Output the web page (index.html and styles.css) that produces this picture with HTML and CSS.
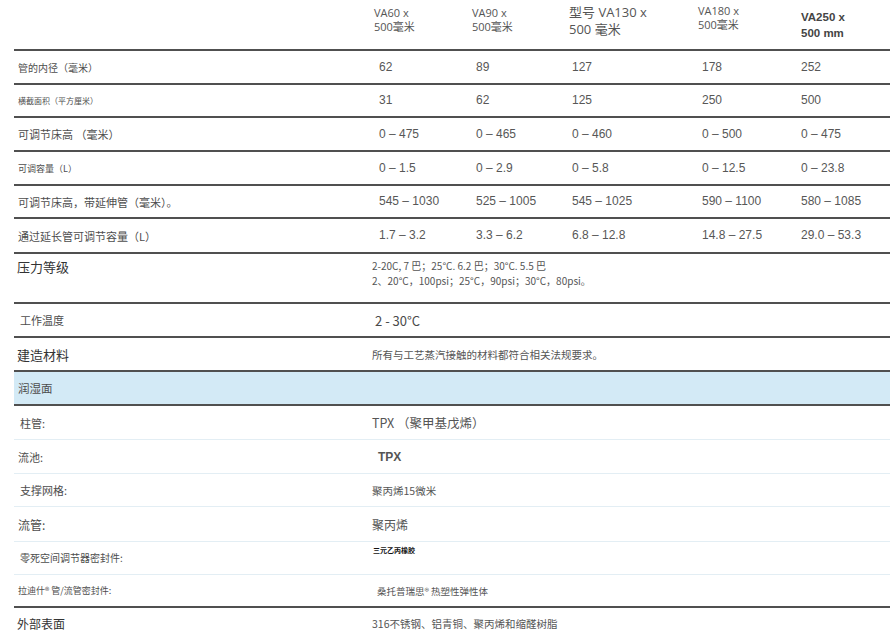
FILE: index.html
```html
<!DOCTYPE html>
<html lang="zh">
<head>
<meta charset="utf-8">
<title>规格</title>
<link rel="stylesheet" href="styles.css">
</head>
<body>
<div class="spec">
  <div class="row head">
    <div></div>
    <div class="h h-a">VA60 x<br>500毫米</div>
    <div class="h h-a">VA90 x<br>500毫米</div>
    <div class="h h-b">型号 VA130 x<br>500 毫米</div>
    <div class="h h-c">VA180 x<br>500毫米</div>
    <div class="h h-d">VA250 x<br>500 mm</div>
  </div>

  <div class="row dark h34">
    <div class="lbl f10">管的内径（毫米）</div>
    <div class="v">62</div><div class="v">89</div><div class="v">127</div><div class="v">178</div><div class="v">252</div>
  </div>
  <div class="row dark h33">
    <div class="lbl f8">横截面积（平方厘米）</div>
    <div class="v">31</div><div class="v">62</div><div class="v">125</div><div class="v">250</div><div class="v">500</div>
  </div>
  <div class="row dark h34">
    <div class="lbl f11">可调节床高 （毫米）</div>
    <div class="v">0 – 475</div><div class="v">0 – 465</div><div class="v">0 – 460</div><div class="v">0 – 500</div><div class="v">0 – 475</div>
  </div>
  <div class="row dark h34">
    <div class="lbl f9">可调容量（L）</div>
    <div class="v">0 – 1.5</div><div class="v">0 – 2.9</div><div class="v">0 – 5.8</div><div class="v">0 – 12.5</div><div class="v">0 – 23.8</div>
  </div>
  <div class="row dark h33">
    <div class="lbl f11">可调节床高，带延伸管（毫米）。</div>
    <div class="v">545 – 1030</div><div class="v">525 – 1005</div><div class="v">545 – 1025</div><div class="v">590 – 1100</div><div class="v">580 – 1085</div>
  </div>
  <div class="row dark h35">
    <div class="lbl f11">通过延长管可调节容量（L）</div>
    <div class="v">1.7 – 3.2</div><div class="v">3.3 – 6.2</div><div class="v">6.8 – 12.8</div><div class="v">14.8 – 27.5</div><div class="v">29.0 – 53.3</div>
  </div>
  <div class="row dark h50 top">
    <div class="lbl f13 big">压力等级</div>
    <div class="span pressure">2-20C, 7 巴；25°C. 6.2 巴；30°C. 5.5 巴<br>2、20°C，100psi；25°C，90psi；30°C，80psi。</div>
  </div>
  <div class="row dark h34">
    <div class="lbl f11 ind">工作温度</div>
    <div class="span temp">2 - 30°C</div>
  </div>
  <div class="row dark h34">
    <div class="lbl f13 big">建造材料</div>
    <div class="span s105">所有与工艺蒸汽接触的材料都符合相关法规要求。</div>
  </div>
  <div class="row blue h34">
    <div class="lbl f115">润湿面</div>
  </div>
  <div class="row light h34">
    <div class="lbl f11 ind">柱管:</div>
    <div class="span tpx">TPX （聚甲基戊烯）</div>
  </div>
  <div class="row light h34">
    <div class="lbl f11">流池:</div>
    <div class="span tpxb">TPX</div>
  </div>
  <div class="row light h33">
    <div class="lbl f11 ind">支撑网格:</div>
    <div class="span s105">聚丙烯15微米</div>
  </div>
  <div class="row light h35">
    <div class="lbl f12">流管:</div>
    <div class="span s12">聚丙烯</div>
  </div>
  <div class="row light h33 zero">
    <div class="lbl f10 ind">零死空间调节器密封件:</div>
    <div class="span tiny">三元乙丙橡胶</div>
  </div>
  <div class="row dark h33">
    <div class="lbl f9">拉迪什® 管/流管密封件:</div>
    <div class="span s95">桑托普瑞思® 热塑性弹性体</div>
  </div>
  <div class="row last">
    <div class="lbl f12 big">外部表面</div>
    <div class="span s105">316不锈钢、铝青铜、聚丙烯和缩醛树脂</div>
  </div>
</div>
</body>
</html>
```

FILE: styles.css
```css
html, body {
  margin: 0;
  padding: 0;
  background: #ffffff;
}

body {
  font-family: "Noto Sans CJK SC", "Noto Sans", sans-serif;
  color: #4a4a4a;
}

.spec {
  margin-left: 14px;
  width: 876px;
}

.row {
  display: grid;
  grid-template-columns: 358px 98px 97px 129px 103px 1fr;
  align-items: center;
  box-sizing: border-box;
}

.row.dark { border-bottom: 2px solid #505050; }
.row.light { border-bottom: 1px solid #e3eef4; }
.row.blue {
  background: #d3eaf6;
  border-bottom: 2px solid #505050;
}

.h33 { height: 33px; }
.h34 { height: 34px; }
.h35 { height: 35px; }
.h50 { height: 50px; }

.row.top { align-items: start; }

.head {
  height: 51px;
  border-bottom: 2px solid #505050;
  align-items: start;
}

.h {
  padding-left: 2px;
  color: #555;
  font-family: "Open Sans", "Noto Sans CJK SC", sans-serif;
  font-size: 11px;
  line-height: 14px;
}
.h-a { padding-top: 6px; }
.h-b { padding-top: 4px; font-size: 13px; line-height: 17px; }
.h-c { padding-top: 4px; }
.h-d {
  padding-top: 9px;
  font-family: "Liberation Sans", "Noto Sans CJK SC", sans-serif;
  font-weight: bold;
  font-size: 11.5px;
  line-height: 16px;
  color: #444;
}

.lbl {
  padding-left: 4px;
  white-space: nowrap;
  color: #4d4d4d;
}
.lbl.ind { padding-left: 6px; }
.lbl.big { padding-left: 3px; color: #333; }
.f8 { font-size: 8px; }
.f9 { font-size: 9px; }
.f10 { font-size: 10px; }
.f11 { font-size: 11px; }
.f115 { font-size: 11.5px; }
.f12 { font-size: 12px; }
.f13 { font-size: 13px; }

.v {
  font-family: "Liberation Sans", "Noto Sans CJK SC", sans-serif;
  font-size: 12px;
  color: #575757;
  white-space: nowrap;
  padding-bottom: 1px;
}
.v:nth-child(2) { padding-left: 7px; }
.v:nth-child(3) { padding-left: 6px; }
.v:nth-child(4) { padding-left: 5px; }
.v:nth-child(5) { padding-left: 6px; }
.v:nth-child(6) { padding-left: 2px; }

.span {
  grid-column: 2 / -1;
  white-space: nowrap;
  color: #555;
}

.top .lbl { padding-top: 4px; line-height: 18px; }

.pressure {
  padding-top: 4px;
  font-size: 10px;
  line-height: 15px;
}

.temp {
  padding-left: 3px;
  font-size: 13px;
  color: #4a4a4a;
}

.s105 { font-size: 10.5px; }
.s12 { font-size: 12px; }
.s95 { font-size: 9.5px; padding-left: 5px; }

.tpx {
  font-size: 12.5px;
}

.tpxb {
  padding-left: 6px;
  font-family: "Liberation Sans", sans-serif;
  font-weight: bold;
  font-size: 12px;
  color: #555;
}

.zero { align-items: start; }
.zero .lbl { padding-top: 8px; }
.tiny {
  padding-top: 3px;
  padding-left: 1px;
  font-size: 7px;
  font-weight: bold;
  color: #111;
}

.row.last {
  height: 30px;
}
```
